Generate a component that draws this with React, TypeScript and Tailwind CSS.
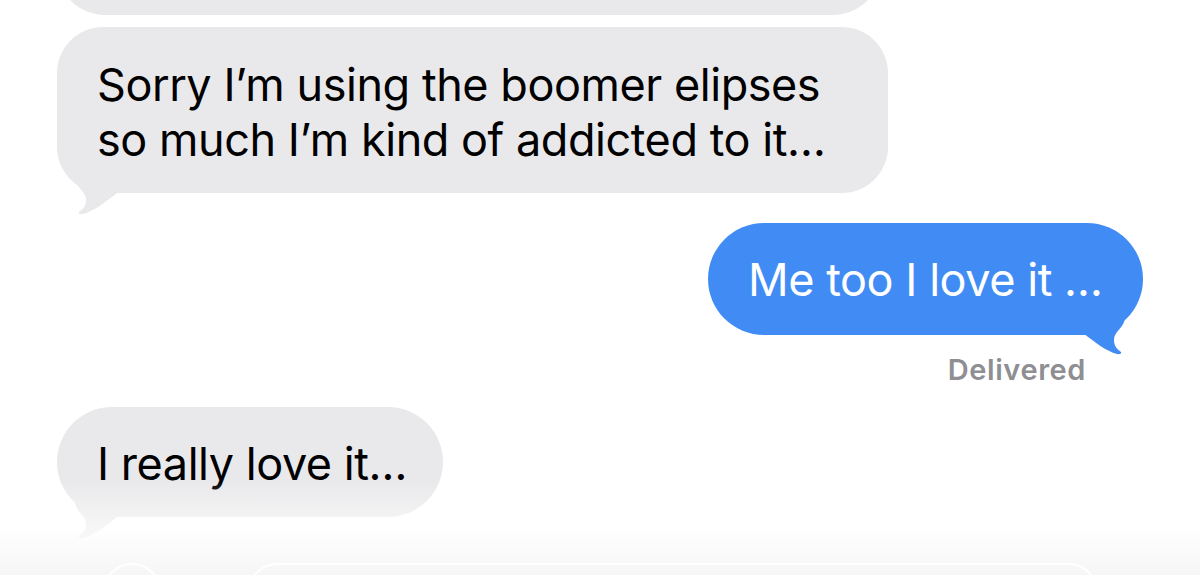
import React from "react";

const GRAY = "#e9e9eb";
const BLUE = "#418cf4";

function TailLeft({ color }: { color: string }) {
  return (
    <svg
      className="absolute left-0 bottom-[-22px]"
      width="70"
      height="62"
      viewBox="0 0 70 62"
    >
      <path
        d="M10 0 L19 29 C22 37 29 39 29 47 C29 53 26 56 22 59 C21 60.5 23 61.5 26 61 C37 58 47 50 60 40 L60 0 Z"
        fill={color}
      />
    </svg>
  );
}

function TailRight({ color }: { color: string }) {
  return (
    <svg
      className="absolute right-0 bottom-[-20px]"
      width="70"
      height="62"
      viewBox="0 0 70 62"
    >
      <path
        d="M60 0 L51 29 C48 37 41 39 41 47 C41 53 44 56 48 59 C49 60.5 47 61.5 44 61 C33 58 23 50 10 40 L10 0 Z"
        fill={color}
      />
    </svg>
  );
}

export default function App() {
  return (
    <div
      className="relative w-[1200px] h-[575px] overflow-hidden bg-white"
      style={{ fontFamily: "Inter, 'Noto Sans', sans-serif" }}
    >
      <div className="flex flex-col px-[57px]">
        {/* previous message, mostly scrolled off */}
        <div className="-mt-[95px] h-[110px] w-[824px] rounded-[48px] bg-[#e9e9eb]" />

        <div className="relative mt-[12px] w-[831px] rounded-[46px] bg-[#e9e9eb] pl-[40px] pt-[30px] pb-[26px] text-[45px] leading-[55px] tracking-[-0.01em] text-black">
          <TailLeft color={GRAY} />
          <div className="relative whitespace-nowrap">
            Sorry I’m using the boomer elipses
            <br />
            so much I’m kind of addicted to it…
          </div>
        </div>

        <div className="relative mt-[30px] self-end w-[435px] rounded-[56px] bg-[#418cf4] pl-[40px] pt-[29px] pb-[28px] text-[45px] leading-[55px] tracking-[-0.01em] text-white">
          <TailRight color={BLUE} />
          <div className="relative whitespace-nowrap">Me too I love it …</div>
        </div>

        <div className="mt-[19px] self-end mr-[57px] text-[29px] leading-[32px] font-semibold tracking-[0.02em] text-[#8e8e93]">
          Delivered
        </div>

        <div className="relative mt-[21px] w-[386px] rounded-[55px] bg-[#e9e9eb] pl-[40px] pt-[29px] pb-[26px] text-[45px] leading-[55px] tracking-[-0.01em] text-black">
          <TailLeft color={GRAY} />
          <div className="relative whitespace-nowrap">I really love it…</div>
        </div>
      </div>

      {/* translucent composer bar fading in at the bottom */}
      <div className="absolute inset-x-0 bottom-0 h-[95px] bg-gradient-to-b from-white/0 via-white/60 to-[#f6f6f6]">
        <div className="flex items-start gap-[87px] pl-[103px] pt-[83px]">
          <div className="h-[58px] w-[58px] shrink-0 rounded-full border-2 border-white" />
          <div className="h-[58px] w-[850px] shrink-0 rounded-[29px] border-2 border-white" />
        </div>
      </div>
    </div>
  );
}
